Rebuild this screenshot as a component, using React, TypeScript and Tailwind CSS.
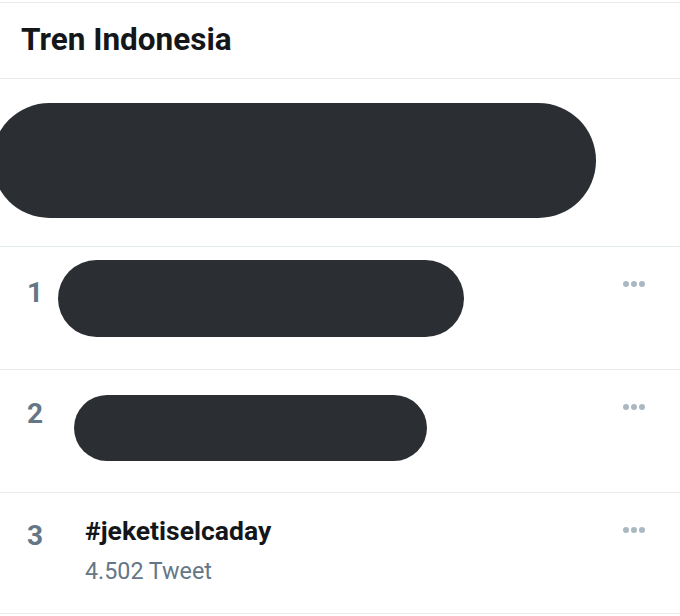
type DotsProps = { top?: string };

function Dots({ top = "pt-[34px]" }: DotsProps) {
  return (
    <div className={`flex gap-[2px] ${top}`}>
      <span className="w-[6px] h-[6px] rounded-full bg-[#aab8c2]" />
      <span className="w-[6px] h-[6px] rounded-full bg-[#aab8c2]" />
      <span className="w-[6px] h-[6px] rounded-full bg-[#aab8c2]" />
    </div>
  );
}

export default function App() {
  return (
    <div className="w-[680px] h-[616px] bg-white overflow-hidden font-['Roboto',sans-serif]">
      {/* header */}
      <div className="mt-[2px] h-[77px] border-t border-b border-[#e6ecf0] flex items-center px-[21px]">
        <h1 className="text-[31.5px] font-bold text-[#14171a] pb-[1px]">Tren Indonesia</h1>
      </div>

      {/* promoted (redacted) */}
      <div className="h-[168px] border-b border-[#e3ebe6] pt-[24px]">
        <div className="-ml-[8px] w-[604px] h-[115px] rounded-full bg-[#2b2f33]" />
      </div>

      {/* 1 */}
      <div className="h-[123px] border-b border-[#e6ecf0] flex pl-[27px] pr-[35px]">
        <div className="w-[31px] pt-[25px] text-[28px] font-bold text-[#657786]">1</div>
        <div className="flex-1 pt-[13px]">
          <div className="w-[406px] h-[77px] rounded-full bg-[#2b2f33]" />
        </div>
        <Dots />
      </div>

      {/* 2 */}
      <div className="h-[123px] border-b border-[#e6ecf0] flex pl-[27px] pr-[35px]">
        <div className="w-[47px] pt-[23px] text-[28px] font-bold text-[#657786]">2</div>
        <div className="flex-1 pt-[25px]">
          <div className="w-[353px] h-[66px] rounded-full bg-[#2b2f33]" />
        </div>
        <Dots />
      </div>

      {/* 3 */}
      <div className="h-[121px] border-b border-[#e6ecf0] flex pl-[27px] pr-[35px]">
        <div className="w-[58px] pt-[22px] text-[28px] font-bold text-[#657786]">3</div>
        <div className="flex-1 pt-[21px]">
          <div className="text-[26.5px] font-bold text-[#14171a] leading-[34px]">#jeketiselcaday</div>
          <div className="text-[23.3px] text-[#657786] leading-[30px] mt-[8px]">4.502 Tweet</div>
        </div>
        <Dots />
      </div>
    </div>
  );
}
